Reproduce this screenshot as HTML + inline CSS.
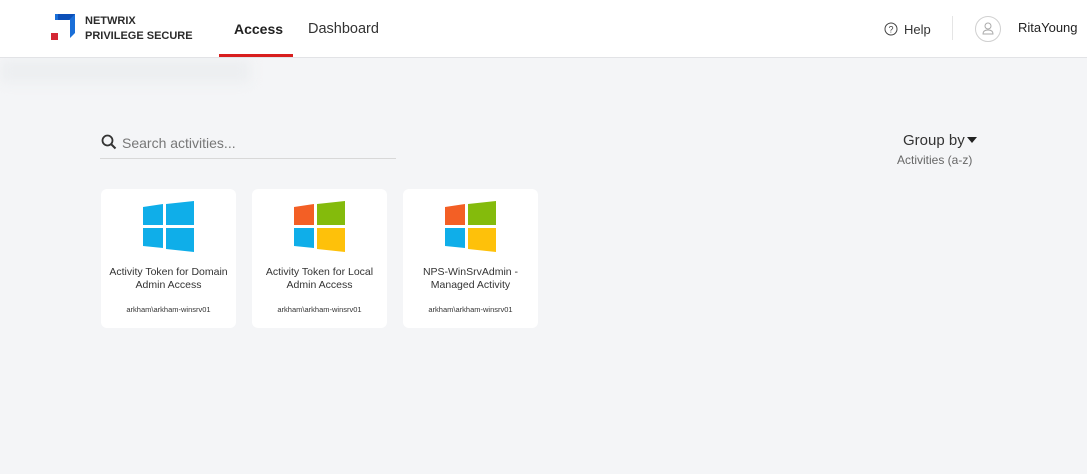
<!DOCTYPE html><html><head><style>
body{margin:0;width:1087px;height:474px;background:#f4f5f7;font-family:"Liberation Sans",sans-serif;position:relative;overflow:hidden}
.hdr{position:absolute;left:0;top:0;width:1087px;height:57px;background:#fff;border-bottom:1px solid #e2e3e6}
.a{position:absolute;white-space:nowrap}
.card{position:absolute;top:189px;width:135px;height:139px;background:#fff;border-radius:6px;text-align:center;color:#333}
.card svg{position:absolute;left:42px;top:12px}
.t{position:absolute;top:77px;left:0;width:135px;font-size:10.5px;line-height:13px}
.s{position:absolute;top:116px;left:0;width:135px;font-size:7.5px}
</style></head><body>
<div class="a" style="left:0;top:60px;width:250px;height:22px;background:#eceef0;filter:blur(6px)"></div>
<div class="hdr">
<svg class="a" style="left:50px;top:14px" width="28" height="28"><polygon points="5,0 25,0 25,19 20,24 20,6 5,6" fill="#1a6fd8"/><polygon points="8,0 25,0 19,6 8,6" fill="#0c4fb8"/><rect x="1" y="19" width="7" height="7" fill="#d42734"/></svg>
<div class="a" style="left:85px;top:14px;font-size:11px;font-weight:bold;color:#2b2b2b;line-height:15px">NETWRIX<br>PRIVILEGE SECURE</div>
<div class="a" style="left:234px;top:21px;font-size:14px;font-weight:bold;color:#222">Access</div>
<div class="a" style="left:219px;top:54px;width:74px;height:3px;background:#d81e1e"></div>
<div class="a" style="left:308px;top:21px;font-size:14.5px;color:#333">Dashboard</div>
<svg class="a" style="left:884px;top:22px" width="14" height="14"><circle cx="7" cy="7" r="6" fill="none" stroke="#444" stroke-width="1"/><text x="7" y="10.5" font-size="9" text-anchor="middle" fill="#444" font-family="Liberation Sans">?</text></svg>
<div class="a" style="left:904px;top:22px;font-size:13px;color:#333">Help</div>
<div class="a" style="left:952px;top:16px;width:1px;height:24px;background:#e5e5e5"></div>
<svg class="a" style="left:974px;top:15px" width="28" height="28"><circle cx="14" cy="14" r="12.5" fill="#fff" stroke="#d0d0d0"/><circle cx="14" cy="11" r="3" fill="none" stroke="#aaa"/><path d="M9 19 Q9 15 14 15 Q19 15 19 19 Z" fill="none" stroke="#aaa"/></svg>
<div class="a" style="left:1018px;top:20px;font-size:13px;color:#222">RitaYoung</div>
</div>
<svg class="a" style="left:101px;top:134px" width="16" height="16"><circle cx="6.5" cy="6.5" r="5" fill="none" stroke="#333" stroke-width="1.8"/><line x1="10" y1="10" x2="14.5" y2="14.5" stroke="#333" stroke-width="2"/></svg>
<div class="a" style="left:122px;top:135px;font-size:14px;color:#777">Search activities...</div>
<div class="a" style="left:100px;top:158px;width:296px;height:1px;background:#d8d8d8"></div>
<div class="a" style="left:903px;top:132px;font-size:15px;color:#333">Group by</div>
<svg class="a" style="left:967px;top:137px" width="10" height="7"><polygon points="0,0 10,0 5,6" fill="#222"/></svg>
<div class="a" style="left:897px;top:153px;font-size:12px;color:#666">Activities (a-z)</div>

<div class="card" style="left:101px"><svg width="52" height="51"><polygon points="0,6 20,3 20,24 0,24" fill="#0faee9"/><polygon points="23,3 51,0 51,24 23,24" fill="#0faee9"/><polygon points="0,27 20,27 20,47 0,45" fill="#0faee9"/><polygon points="23,27 51,27 51,51 23,48" fill="#0faee9"/></svg><div class="t">Activity Token for Domain<br>Admin Access</div><div class="s">arkham\arkham-winsrv01</div></div>
<div class="card" style="left:252px"><svg width="52" height="51"><polygon points="0,6 20,3 20,24 0,24" fill="#f35f25"/><polygon points="23,3 51,0 51,24 23,24" fill="#84bb0c"/><polygon points="0,27 20,27 20,47 0,45" fill="#0faee9"/><polygon points="23,27 51,27 51,51 23,48" fill="#fec10a"/></svg><div class="t">Activity Token for Local<br>Admin Access</div><div class="s">arkham\arkham-winsrv01</div></div>
<div class="card" style="left:403px"><svg width="52" height="51"><polygon points="0,6 20,3 20,24 0,24" fill="#f35f25"/><polygon points="23,3 51,0 51,24 23,24" fill="#84bb0c"/><polygon points="0,27 20,27 20,47 0,45" fill="#0faee9"/><polygon points="23,27 51,27 51,51 23,48" fill="#fec10a"/></svg><div class="t">NPS-WinSrvAdmin -<br>Managed Activity</div><div class="s">arkham\arkham-winsrv01</div></div>
</body></html>
